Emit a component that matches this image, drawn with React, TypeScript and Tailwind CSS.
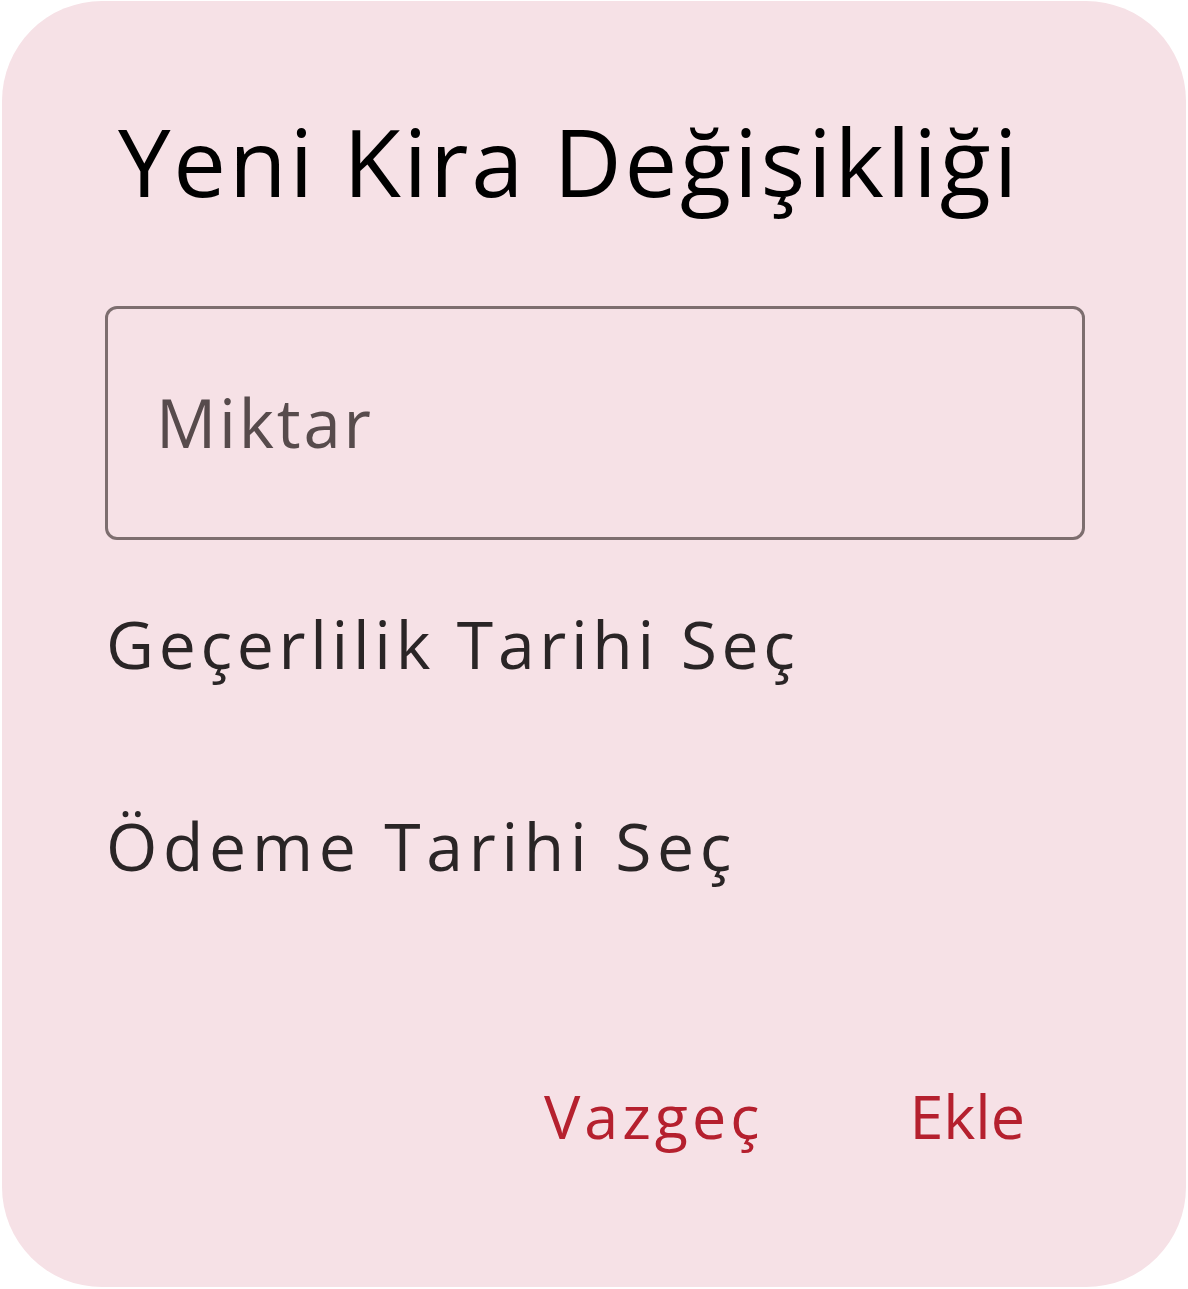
export default function App() {
  return (
    <div className="w-[1188px] h-[1289px] bg-white" style={{ fontFamily: '"Open Sans", sans-serif' }}>
      <div className="ml-[2px] pt-[1px] w-[1184px]">
        <div className="h-[1286px] rounded-[100px] bg-[#f6e1e6] pl-[103px] pr-[101px] pt-[105px]">
          <h1 className="pl-[13px] text-[94px] leading-[110px] text-black tracking-[2.8px]">
            Yeni Kira Değişikliği
          </h1>
          <div className="mt-[90px] h-[234px] rounded-[12px] border-[3px] border-[#7d6e6f] flex items-center pl-[48px] pb-[2px]">
            <span className="text-[67px] leading-none text-[#574b4c] tracking-[2.8px]">Miktar</span>
          </div>
          <div className="mt-[63px] pl-[1px] text-[66px] leading-[80px] text-[#2a2526] tracking-[4.7px]">
            Geçerlilik Tarihi Seç
          </div>
          <div className="mt-[122px] pl-[1px] text-[66px] leading-[80px] text-[#2a2526] tracking-[5.7px]">
            Ödeme Tarihi Seç
          </div>
          <div className="mt-[191px] flex justify-end items-center gap-[150px] pr-[60px] text-[61px] leading-[80px] text-[#b5202e]">
            <button className="tracking-[4px] -mr-[4px]">Vazgeç</button>
            <button>Ekle</button>
          </div>
        </div>
      </div>
    </div>
  );
}
